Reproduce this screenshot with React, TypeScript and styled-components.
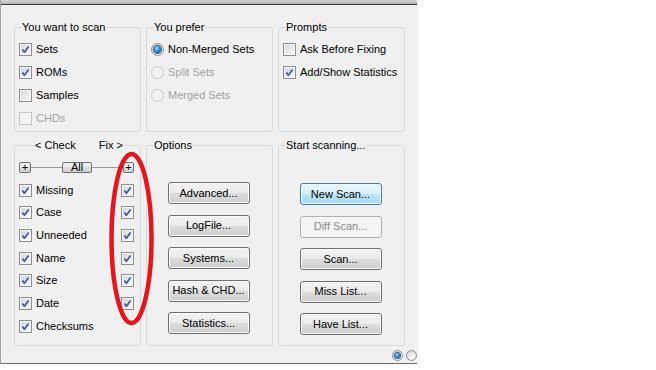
import React from "react";
import styled, { createGlobalStyle, css } from "styled-components";

const GlobalStyle = createGlobalStyle`
  body {
    margin: 0;
    background: #ffffff;
    font-family: "Liberation Sans", Arial, sans-serif;
    font-size: 11px;
    color: #000000;
  }
`;

const Window = styled.div`
  position: relative;
  width: 417px;
  height: 364px;
  box-sizing: border-box;
  background: #f0f0f0;
  border-left: 1px solid #a3a3a3;
  border-bottom: 1px solid #6e6e6e;
  box-shadow: 0 2px 3px rgba(0, 0, 0, 0.12);
  display: flex;
  flex-direction: column;
`;

const TopEdge = styled.div`
  height: 5px;
  box-sizing: border-box;
  background: linear-gradient(#d4d4d4, #b2b2b2);
  border-bottom: 1px solid #3c3c3c;
`;

const Body = styled.div`
  padding: 16px 0 0 13px;
  display: grid;
  grid-template-columns: repeat(3, 127px);
  grid-template-rows: 111px 207px;
  column-gap: 5px;
  row-gap: 7px;
`;

const Group = styled.fieldset`
  margin: 0;
  padding: 0 6px 0 4px;
  min-width: 0;
  box-sizing: border-box;
  border: 1px solid #d5d9dc;
  border-radius: 3px;
`;

const Legend = styled.legend<{ $indent?: number; $width?: number }>`
  margin-left: ${(p) => p.$indent ?? 2}px;
  padding: 0 1px;
  line-height: 13px;
  display: flex;
  justify-content: space-between;
  ${(p) => p.$width && css`width: ${p.$width}px;`}
`;

const Stack = styled.div<{ $top: number; $gap: number; $center?: boolean }>`
  display: flex;
  flex-direction: column;
  padding-top: ${(p) => p.$top}px;
  gap: ${(p) => p.$gap}px;
  align-items: ${(p) => (p.$center ? "center" : "stretch")};
`;

const Item = styled.label<{ $disabled?: boolean }>`
  display: flex;
  align-items: center;
  gap: 4px;
  height: 13px;
  line-height: 13px;
  white-space: nowrap;
  color: ${(p) => (p.$disabled ? "#a3a3a3" : "#000000")};
`;

const Box = styled.span<{ $disabled?: boolean }>`
  flex: none;
  width: 13px;
  height: 13px;
  box-sizing: border-box;
  border: 1px solid ${(p) => (p.$disabled ? "#c6c6c6" : "#8e8f8f")};
  background: ${(p) =>
    p.$disabled
      ? "#f4f4f4"
      : "linear-gradient(135deg, #d2d4d8 0%, #e9eaec 55%, #fbfbfb 100%)"};
  box-shadow: inset 0 0 0 1px ${(p) => (p.$disabled ? "#f7f7f7" : "#f4f4f4")};
  display: flex;
  align-items: center;
  justify-content: center;
`;

const RadioRing = styled.span<{ $disabled?: boolean; $size?: number }>`
  flex: none;
  width: ${(p) => p.$size ?? 13}px;
  height: ${(p) => p.$size ?? 13}px;
  box-sizing: border-box;
  border-radius: 50%;
  border: 1px solid ${(p) => (p.$disabled ? "#c9c9c9" : "#8e8f8f")};
  background: ${(p) =>
    p.$disabled
      ? "#f3f3f3"
      : "radial-gradient(circle at 65% 70%, #fdfdfd 0%, #e6e6e6 55%, #cfd0d2 100%)"};
  display: flex;
  align-items: center;
  justify-content: center;
`;

const RadioDot = styled.span<{ $size?: number }>`
  width: ${(p) => p.$size ?? 7}px;
  height: ${(p) => p.$size ?? 7}px;
  border-radius: 50%;
  background: radial-gradient(circle at 40% 35%, #a9e0ff 0%, #2d8ad4 45%, #0c3d78 100%);
  box-shadow: 0 0 0 1px #2f5d8c;
`;

const PairRow = styled.div`
  display: flex;
  align-items: center;
  justify-content: space-between;
  height: 13px;
`;

const LinkRow = styled.div`
  display: flex;
  align-items: center;
  height: 11px;
  margin-bottom: 1px;
`;

const Rule = styled.span`
  flex: 1;
  height: 1px;
  background: #9c9c9c;
`;

const Mini = styled.span<{ $width: number }>`
  flex: none;
  width: ${(p) => p.$width}px;
  height: 11px;
  box-sizing: border-box;
  border: 1px solid #707070;
  border-radius: 2px;
  background: linear-gradient(#f2f2f2 0%, #ebebeb 49%, #dddddd 50%, #cfcfcf 100%);
  display: flex;
  align-items: center;
  justify-content: center;
  line-height: 9px;
  font-size: 11px;
`;

const Button = styled.button<{ $variant?: "default" | "focus" | "disabled" }>`
  width: 82px;
  height: 22px;
  padding: 0;
  border-radius: 3px;
  font-family: "Liberation Sans", Arial, sans-serif;
  font-size: 11px;
  line-height: 1;
  color: #000000;
  border: 1px solid #707070;
  background: linear-gradient(#f2f2f2 0%, #ebebeb 49%, #dddddd 50%, #cfcfcf 100%);
  box-shadow: inset 0 0 0 1px #fbfbfb;
  ${(p) =>
    p.$variant === "focus" &&
    css`
      border-color: #3c7fb1;
      background: linear-gradient(#eaf6fd 0%, #d9f0fc 49%, #bee6fd 50%, #a7d9f5 100%);
      box-shadow: inset 0 0 0 1px #f4fbff;
    `}
  ${(p) =>
    p.$variant === "disabled" &&
    css`
      border-color: #adb2b5;
      background: #f4f4f4;
      color: #8a8a8a;
      box-shadow: none;
    `}
`;

const Footer = styled.div`
  display: flex;
  justify-content: flex-end;
  gap: 3px;
  margin-top: 4px;
`;

const Annotation = styled.svg`
  position: absolute;
  left: 0;
  top: 0;
  width: 417px;
  height: 364px;
  pointer-events: none;
`;

const Tick = () => (
  <svg width="9" height="9" viewBox="0 0 9 9">
    <path d="M1.4 4.6 L3.4 7.2 L7.6 1.4" fill="none" stroke="#3f56a0" strokeWidth="1.7" strokeLinejoin="round" />
  </svg>
);

const Check = ({ checked, disabled }: { checked?: boolean; disabled?: boolean }) => (
  <Box $disabled={disabled}>{checked && <Tick />}</Box>
);

const CheckItem = ({ text, checked, disabled }: { text: string; checked?: boolean; disabled?: boolean }) => (
  <Item $disabled={disabled}>
    <Check checked={checked} disabled={disabled} />
    {text}
  </Item>
);

const RadioItem = ({ text, checked, disabled }: { text: string; checked?: boolean; disabled?: boolean }) => (
  <Item $disabled={disabled}>
    <RadioRing $disabled={disabled}>{checked && <RadioDot />}</RadioRing>
    {text}
  </Item>
);

const fixRows = ["Missing", "Case", "Unneeded", "Name", "Size", "Date"];

export default function App() {
  return (
    <>
      <GlobalStyle />
      <Window>
        <TopEdge />
        <Body>
          <Group>
            <Legend>You want to scan</Legend>
            <Stack $top={9} $gap={10}>
              <CheckItem text="Sets" checked />
              <CheckItem text="ROMs" checked />
              <CheckItem text="Samples" />
              <CheckItem text="CHDs" disabled />
            </Stack>
          </Group>

          <Group>
            <Legend>You prefer</Legend>
            <Stack $top={9} $gap={10}>
              <RadioItem text="Non-Merged Sets" checked />
              <RadioItem text="Split Sets" disabled />
              <RadioItem text="Merged Sets" disabled />
            </Stack>
          </Group>

          <Group>
            <Legend>Prompts</Legend>
            <Stack $top={9} $gap={10}>
              <CheckItem text="Ask Before Fixing" />
              <CheckItem text="Add/Show Statistics" checked />
            </Stack>
          </Group>

          <Group>
            <Legend $indent={15} $width={88}>
              <span>&lt; Check</span>
              <span>Fix &gt;</span>
            </Legend>
            <Stack $top={10} $gap={9.7}>
              <LinkRow>
                <Mini $width={12}>+</Mini>
                <Rule />
                <Mini $width={30}>All</Mini>
                <Rule />
                <Mini $width={11}>+</Mini>
              </LinkRow>
              {fixRows.map((r) => (
                <PairRow key={r}>
                  <CheckItem text={r} checked />
                  <Check checked />
                </PairRow>
              ))}
              <PairRow>
                <CheckItem text="Checksums" checked />
              </PairRow>
            </Stack>
          </Group>

          <Group>
            <Legend>Options</Legend>
            <Stack $top={30} $gap={10.5} $center>
              <Button>Advanced...</Button>
              <Button>LogFile...</Button>
              <Button>Systems...</Button>
              <Button>Hash &amp; CHD...</Button>
              <Button>Statistics...</Button>
            </Stack>
          </Group>

          <Group>
            <Legend>Start scanning...</Legend>
            <Stack $top={31} $gap={10.5} $center>
              <Button $variant="focus">New Scan...</Button>
              <Button $variant="disabled">Diff Scan...</Button>
              <Button>Scan...</Button>
              <Button>Miss List...</Button>
              <Button>Have List...</Button>
            </Stack>
          </Group>
        </Body>

        <Footer>
          <RadioRing $size={11}>
            <RadioDot $size={5} />
          </RadioRing>
          <RadioRing $size={11} />
        </Footer>

        <Annotation viewBox="0 0 417 364">
          <ellipse cx="130.5" cy="238.5" rx="20" ry="84.5" fill="none" stroke="#e3151f" strokeWidth="4.5" />
        </Annotation>
      </Window>
    </>
  );
}
